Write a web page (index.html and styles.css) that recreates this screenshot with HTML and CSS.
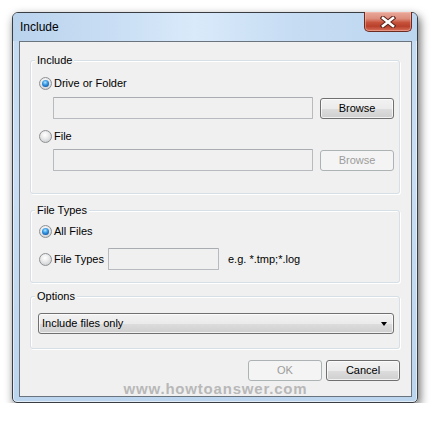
FILE: index.html
```html
<!DOCTYPE html>
<html>
<head>
<meta charset="utf-8">
<link rel="stylesheet" href="styles.css">
</head>
<body>
<div class="window">
  <div class="titlebar">
    <span class="title">Include</span>
    <div class="close">
      <svg width="16" height="12" viewBox="0 0 16 12">
        <path d="M3 2 L13 10 M13 2 L3 10" stroke="#5b2219" stroke-width="4.6" stroke-linecap="square" fill="none"/>
        <path d="M3 2 L13 10 M13 2 L3 10" stroke="#ffffff" stroke-width="2.6" stroke-linecap="square" fill="none"/>
      </svg>
    </div>
  </div>
  <div class="client">
    <div class="group g-include">
      <span class="group-label">Include</span>
      <div class="radio-row r-drive"><span class="radio checked"></span><span class="rtext">Drive or Folder</span></div>
      <div class="field-row f-drive"><span class="textbox tb-wide"></span><span class="btn">Browse</span></div>
      <div class="radio-row r-file"><span class="radio"></span><span class="rtext">File</span></div>
      <div class="field-row f-file"><span class="textbox tb-wide"></span><span class="btn disabled">Browse</span></div>
    </div>
    <div class="group g-types">
      <span class="group-label">File Types</span>
      <div class="radio-row r-all"><span class="radio checked"></span><span class="rtext">All Files</span></div>
      <div class="radio-row r-types"><span class="radio"></span><span class="rtext types-label">File Types</span><span class="textbox tb-types"></span><span class="hint">e.g. *.tmp;*.log</span></div>
    </div>
    <div class="group g-options">
      <span class="group-label">Options</span>
      <div class="dropdown"><span class="dd-text">Include files only</span><span class="dd-arrow"></span></div>
    </div>
    <div class="actions">
      <span class="btn disabled">OK</span>
      <span class="btn">Cancel</span>
    </div>
    <div class="watermark">www.howtoanswer.com</div>
  </div>
</div>
</body>
</html>
```

FILE: styles.css
```css
html, body {
  margin: 0;
  padding: 0;
  background: #ffffff;
}

body {
  font-family: "Liberation Sans", Arial, sans-serif;
  font-size: 11px;
  color: #000000;
}

.window {
  box-sizing: border-box;
  width: 406px;
  height: 391px;
  margin: 12px 0 0 12px;
  border: 1px solid #3a3d42;
  border-radius: 6px 6px 5px 5px;
  background: linear-gradient(to bottom, #c3daf1 0%, #c9def3 40%, #bcd5ee 100%);
  box-shadow: 2px 4px 10px rgba(0, 0, 0, 0.6), inset 0 0 0 1px rgba(255, 255, 255, 0.55);
  display: flex;
  flex-direction: column;
}

.titlebar {
  height: 28px;
  display: flex;
  align-items: center;
  padding-left: 7px;
  border-radius: 5px 5px 0 0;
  background: linear-gradient(to right, #bad3ed 0%, #c9def4 25%, #d9eafa 45%, #c6dcf3 70%, #bdd6f0 100%);
}

.title {
  font-family: "Liberation Sans", Arial, sans-serif;
  font-size: 12px;
  color: #000000;
  flex: 1;
}

.close {
  align-self: flex-start;
  margin-top: -1px;
  margin-right: 5px;
  width: 48px;
  height: 20px;
  box-sizing: border-box;
  border: 1px solid #6b2b20;
  border-top: none;
  border-radius: 0 0 5px 5px;
  background: linear-gradient(to bottom, #e9a99b 0%, #dd8d7c 35%, #c7533d 55%, #b8402b 75%, #d77059 100%);
  box-shadow: inset 0 0 0 1px rgba(255, 200, 190, 0.45);
  display: flex;
  align-items: center;
  justify-content: center;
}

.close svg {
  display: block;
}

.client {
  box-sizing: border-box;
  height: 356px;
  margin: 0 5px 5px 6px;
  border: 1px solid #69747f;
  background: #f0f0f0;
  display: flex;
  flex-direction: column;
}

.group {
  box-sizing: border-box;
  width: 370px;
  margin-left: 10px;
  border: 1px solid #d5dfe5;
  border-radius: 3px;
  box-shadow: inset 1px 1px 0 #ffffff, 1px 1px 0 #ffffff;
}

.g-include {
  margin-top: 18px;
  padding-bottom: 22px;
}

.g-types {
  margin-top: 16px;
  padding-bottom: 12px;
}

.g-options {
  margin-top: 13px;
  padding-bottom: 14px;
}

.group-label {
  display: block;
  width: fit-content;
  height: 13px;
  line-height: 13px;
  margin-top: -7px;
  margin-left: 4px;
  padding: 0 2px;
  background: #f0f0f0;
}

.radio-row {
  display: flex;
  align-items: center;
  padding-left: 8px;
  height: 13px;
  line-height: 13px;
}

.r-drive { margin-top: 10px; }
.r-file { margin-top: 11px; }
.r-all { margin-top: 8px; }
.r-types { margin-top: 10px; height: 22px; }

.radio {
  position: relative;
  flex: none;
  box-sizing: border-box;
  width: 13px;
  height: 13px;
  border-radius: 50%;
  border: 1px solid #8e9194;
  background: radial-gradient(circle at 45% 35%, #ffffff 0%, #eeeeee 35%, #d2d4d6 75%, #c3c6c9 100%);
  margin-right: 2px;
}

.radio.checked::after {
  content: "";
  position: absolute;
  left: 2px;
  top: 2px;
  width: 7px;
  height: 7px;
  border-radius: 50%;
  background: radial-gradient(circle at 45% 35%, #b6e6ff 0%, #43a3e8 35%, #1567b7 70%, #0b3f7a 100%);
}

.rtext {
  white-space: nowrap;
}

.types-label {
  width: 54px;
}

.field-row {
  display: flex;
  align-items: flex-start;
  padding-left: 22px;
  height: 22px;
}

.f-drive { margin-top: 7px; }
.f-file { margin-top: 6px; }

.textbox {
  display: block;
  box-sizing: border-box;
  height: 22px;
  border: 1px solid #b7bbbf;
  border-top-color: #a9adb1;
  border-radius: 1px;
  background: #f0f0f0;
  flex: none;
}

.tb-wide {
  width: 260px;
}

.tb-types {
  width: 111px;
}

.hint {
  margin-left: 9px;
  white-space: nowrap;
}

.btn {
  display: flex;
  align-items: center;
  justify-content: center;
  box-sizing: border-box;
  width: 74px;
  height: 21px;
  flex: none;
  border: 1px solid #707070;
  border-radius: 3px;
  background: linear-gradient(to bottom, #f2f2f2 0%, #ebebeb 50%, #dddddd 51%, #cfcfcf 100%);
  box-shadow: inset 0 0 0 1px rgba(255, 255, 255, 0.7);
  color: #000000;
  line-height: 13px;
}

.field-row .btn {
  margin-left: 7px;
  margin-top: 1px;
}

.btn.disabled {
  border-color: #adb2b5;
  background: #f4f4f4;
  box-shadow: none;
  color: #9c9c9c;
}

.dropdown {
  box-sizing: border-box;
  width: 356px;
  height: 21px;
  margin-top: 10px;
  margin-left: 7px;
  border: 1px solid #707070;
  border-radius: 3px;
  background: linear-gradient(to bottom, #f2f2f2 0%, #ebebeb 50%, #dddddd 51%, #cfcfcf 100%);
  box-shadow: inset 0 0 0 1px rgba(255, 255, 255, 0.7);
  display: flex;
  align-items: center;
  padding-left: 3px;
  padding-right: 6px;
}

.dd-text {
  flex: 1;
  line-height: 13px;
}

.dd-arrow {
  width: 0;
  height: 0;
  border-left: 3.5px solid transparent;
  border-right: 3.5px solid transparent;
  border-top: 4px solid #000000;
  margin-top: 1px;
}

.actions {
  display: flex;
  justify-content: flex-end;
  gap: 4px;
  margin-top: 11px;
  margin-right: 11px;
}

.watermark {
  text-align: center;
  font-family: "Liberation Sans", Arial, sans-serif;
  font-weight: bold;
  font-size: 15px;
  letter-spacing: 0.8px;
  line-height: 14px;
  color: #b8b8b8;
  margin-top: 1px;
  white-space: nowrap;
}
```
